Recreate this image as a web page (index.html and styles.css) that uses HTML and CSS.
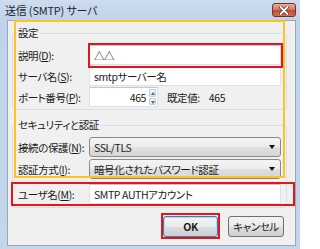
FILE: index.html
```html
<!DOCTYPE html>
<html lang="ja">
<head>
<meta charset="utf-8">
<title>送信 (SMTP) サーバ</title>
<link rel="stylesheet" href="styles.css">
</head>
<body>
<div class="window">
  <div class="titlebar">
    <span class="title">送信 (SMTP) サーバ</span>
    <div class="close">
      <svg width="10" height="9" viewBox="0 0 10 9">
        <path d="M1.5 1 L8.5 8 M8.5 1 L1.5 8" stroke="#5a2a24" stroke-width="3.2" stroke-linecap="round"/>
        <path d="M1.5 1 L8.5 8 M8.5 1 L1.5 8" stroke="#ffffff" stroke-width="1.8" stroke-linecap="round"/>
      </svg>
    </div>
  </div>
  <div class="client">
    <fieldset class="group g1">
      <legend>設定</legend>
      <div class="row"><span class="label">説明(<u>D</u>):</span><div class="input">△△</div></div>
      <div class="row"><span class="label">サーバ名(<u>S</u>):</span><div class="input">smtpサーバー名</div></div>
      <div class="row">
        <span class="label">ポート番号(<u>P</u>):</span>
        <div class="input port">
          <span class="num">465</span>
          <div class="spin">
            <span class="up"></span>
            <span class="down"></span>
          </div>
        </div>
        <span class="default">既定値:</span>
        <span class="default-val">465</span>
      </div>
    </fieldset>
    <fieldset class="group g2">
      <legend>セキュリティと認証</legend>
      <div class="row"><span class="label">接続の保護(<u>N</u>):</span><div class="select">SSL/TLS<i class="arrow"></i></div></div>
      <div class="row gap2"><span class="label">認証方式(<u>I</u>):</span><div class="select">暗号化されたパスワード認証<i class="arrow"></i></div></div>
      <div class="row user"><span class="label">ユーザ名(<u>M</u>):</span><div class="input">SMTP AUTHアカウント</div></div>
    </fieldset>
    <div class="buttons">
      <button class="btn ok">OK</button>
      <button class="btn">キャンセル</button>
    </div>
  </div>
  <div class="mark orange"></div>
  <div class="mark red red-desc"></div>
  <div class="mark red red-user"></div>
  <div class="mark red red-ok"></div>
</div>
</body>
</html>
```

FILE: styles.css
```css
html, body {
  margin: 0;
  padding: 0;
}
body {
  width: 300px;
  height: 249px;
  overflow: hidden;
  font-family: "Noto Sans CJK JP", "Noto Sans", sans-serif;
  font-size: 10.5px;
  letter-spacing: -0.4px;
  font-feature-settings: "palt";
  color: #1b1b1b;
}
.window {
  position: relative;
  width: 300px;
  height: 249px;
  box-sizing: border-box;
  padding: 0 4px 3px 7px;
  background: linear-gradient(#cddcee, #bfd3ea 20px, #c4d6eb);
}
.titlebar {
  height: 20px;
  display: flex;
  align-items: flex-start;
  justify-content: space-between;
  margin-left: -2px;
}
.title {
  font-size: 11px;
  letter-spacing: -0.2px;
  line-height: 20px;
  color: #1e2630;
}
.close {
  margin-top: 3px;
  width: 24px;
  height: 14px;
  box-sizing: border-box;
  border: 1px solid #6e3129;
  border-radius: 3px;
  background: linear-gradient(#e7ab9c, #d67a66 45%, #c5472f 55%, #d4705a);
  display: flex;
  align-items: center;
  justify-content: center;
}
.client {
  height: 226px;
  box-sizing: border-box;
  background: #f0f0f0;
  border: 1px solid #98a7b9;
  display: flex;
  flex-direction: column;
}
.group {
  margin: 5px 8px 0 4px;
  padding: 5px 5px 2px 5px;
  border: 1px solid #d5dfe5;
  border-radius: 3px;
  min-width: 0;
}
.group legend {
  padding: 0 2px;
  margin-left: -2px;
  line-height: 14px;
}
.g2 {
  margin-top: 8px;
  padding-bottom: 3px;
}
.row {
  display: flex;
  align-items: center;
  height: 20px;
}
.g1 .row + .row {
  margin-top: 1px;
}
.row.gap2 {
  margin-top: 2px;
}
.row.user {
  margin-top: 5px;
}
.label {
  width: 71px;
  flex: none;
  white-space: nowrap;
}
u {
  text-decoration: underline;
  text-underline-offset: 1px;
}
.input {
  flex: 1;
  height: 20px;
  box-sizing: border-box;
  background: #fff;
  border: 1px solid #dde2e8;
  border-top-color: #c3c8cf;
  padding: 0 4px;
  display: flex;
  align-items: center;
  white-space: nowrap;
}
.input.port {
  flex: none;
  width: 69px;
  padding: 0;
}
.port .num {
  flex: 1;
  text-align: right;
  padding-right: 3px;
}
.spin {
  width: 7px;
  height: 16px;
  margin-right: 1px;
  display: flex;
  flex-direction: column;
  gap: 1px;
}
.spin span {
  flex: 1;
  background: linear-gradient(#f4f7fb, #dfe6ef);
  border: 1px solid #c2ccd8;
  border-radius: 1px;
  position: relative;
}
.spin .up::after,
.spin .down::after {
  content: "";
  position: absolute;
  left: 1px;
  width: 0;
  height: 0;
  border-left: 2px solid transparent;
  border-right: 2px solid transparent;
}
.spin .up::after {
  top: 2px;
  border-bottom: 3px solid #4f6a8f;
}
.spin .down::after {
  top: 2px;
  border-top: 3px solid #4f6a8f;
}
.default {
  margin-left: 9px;
}
.default-val {
  margin-left: 9px;
}
.select {
  flex: 1;
  height: 20px;
  box-sizing: border-box;
  border: 1px solid #8a8a8a;
  border-radius: 3px;
  background: linear-gradient(#f4f4f4, #ececec 50%, #e0e0e0 50%, #d6d6d6);
  padding: 0 4px;
  display: flex;
  align-items: center;
  justify-content: space-between;
  white-space: nowrap;
}
.arrow {
  width: 0;
  height: 0;
  border-left: 3px solid transparent;
  border-right: 3px solid transparent;
  border-top: 4px solid #111;
  margin-right: 1px;
}
.buttons {
  display: flex;
  justify-content: flex-end;
  gap: 10px;
  margin-top: 8px;
  padding-right: 11px;
}
.btn {
  height: 21px;
  box-sizing: border-box;
  font-family: inherit;
  font-size: 10.5px;
  letter-spacing: -0.4px;
  font-feature-settings: "palt";
  color: #1b1b1b;
  border: 1px solid #707070;
  border-radius: 3px;
  background: linear-gradient(#f3f3f3, #ebebeb 50%, #dddddd 50%, #cfcfcf);
  padding: 0;
  width: 56px;
}
.btn.ok {
  width: 55px;
  border-color: #3c7fb1;
  box-shadow: inset 0 0 0 1px #a9dcf6;
  font-weight: bold;
}
.mark {
  position: absolute;
  box-sizing: border-box;
  pointer-events: none;
}
.orange {
  left: 14px;
  top: 20px;
  width: 271px;
  height: 158px;
  border: 2px solid #ffc41e;
}
.red {
  border: 2px solid #e8141c;
}
.red-desc {
  left: 88px;
  top: 43px;
  width: 195px;
  height: 25px;
}
.red-user {
  left: 11px;
  top: 182px;
  width: 284px;
  height: 24px;
}
.red-ok {
  left: 161px;
  top: 213px;
  width: 59px;
  height: 26px;
}
```
